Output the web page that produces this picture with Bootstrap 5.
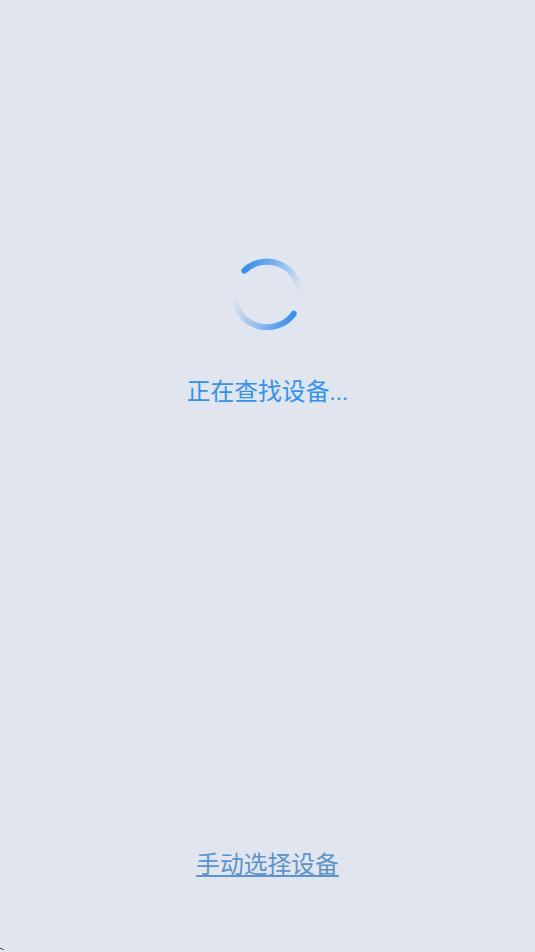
<!DOCTYPE html>
<html lang="zh">
<head>
<meta charset="utf-8">
<title>正在查找设备</title>
<link href="https://cdn.jsdelivr.net/npm/bootstrap@5.3.0/dist/css/bootstrap.min.css" rel="stylesheet">
<style>
html, body { height: 100%; }
body { background: #e1e6ee; font-family: "Roboto", "Noto Sans CJK SC", sans-serif; }
.screen-wrap { height: 952px; padding-top: 258px; padding-bottom: 69px; }
.spin-svg { display: block; width: 72px; height: 72px; }
.search-label { color: #2f93f3; font-size: 23.8px; line-height: 36px; margin-top: 44px; }
.manual-link { color: #5a93cd; font-size: 23.8px; line-height: 36px; }
.manual-link:hover { color: #5a93cd; }
.corner-mark { left: 0; bottom: 0; width: 6px; height: 6px; display: block; }
</style>
</head>
<body class="position-relative">
<div class="screen-wrap d-flex flex-column align-items-center justify-content-between">
  <div class="d-flex flex-column align-items-center">
    <svg class="spin-svg" viewBox="0 0 72 72" fill="none">
      <defs>
        <linearGradient id="arcA" gradientUnits="userSpaceOnUse" x1="13" y1="12" x2="69" y2="34">
          <stop offset="0" stop-color="#3390f0"/>
          <stop offset="0.35" stop-color="#6aabef"/>
          <stop offset="1" stop-color="#e1e6ee"/>
        </linearGradient>
        <linearGradient id="arcB" gradientUnits="userSpaceOnUse" x1="63" y1="58" x2="3" y2="36">
          <stop offset="0" stop-color="#3390f0"/>
          <stop offset="0.4" stop-color="#82b7ef"/>
          <stop offset="1" stop-color="#e1e6ee"/>
        </linearGradient>
      </defs>
      <path d="M13.4 12.6 A33 33 0 0 1 69 36.3" stroke="url(#arcA)" stroke-width="6" stroke-linecap="round"/>
      <path d="M62.7 55.7 A33 33 0 0 1 3 36.3" stroke="url(#arcB)" stroke-width="6" stroke-linecap="round"/>
    </svg>
    <div class="search-label">正在查找设备...</div>
  </div>
  <a href="#" class="manual-link">手动选择设备</a>
</div>
<svg class="corner-mark position-absolute" viewBox="0 0 6 6" aria-hidden="true">
  <rect x="0" y="2" width="2" height="1" fill="#3a3f46"/>
  <rect x="2" y="3" width="2" height="1" fill="#5a5f66"/>
</svg>
<script src="https://cdn.jsdelivr.net/npm/bootstrap@5.3.0/dist/js/bootstrap.bundle.min.js"></script>
</body>
</html>
